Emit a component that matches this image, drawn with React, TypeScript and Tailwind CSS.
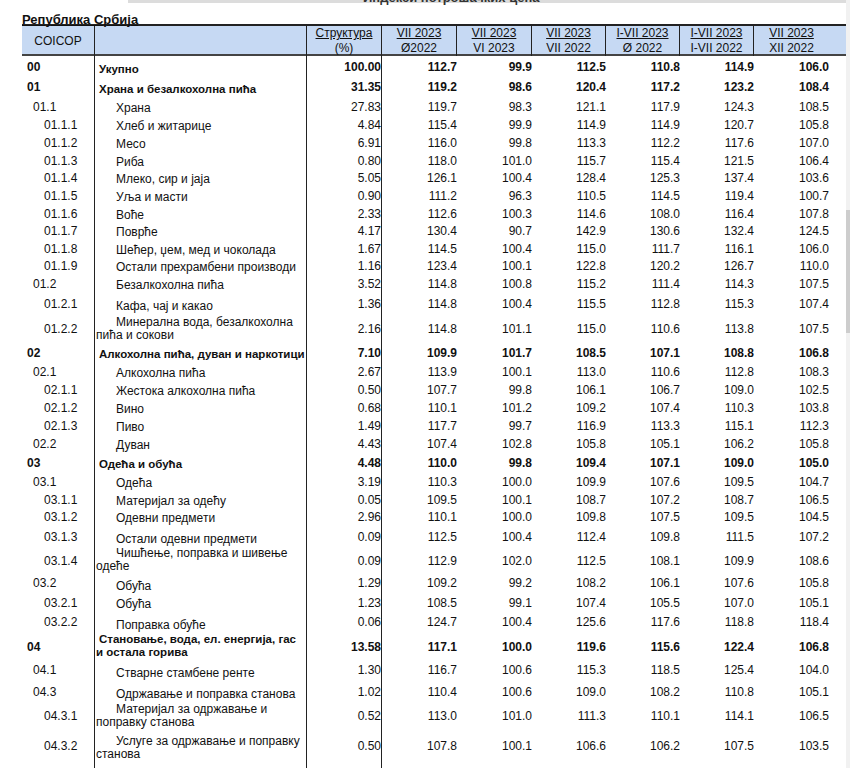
const cols = "grid grid-cols-[73px_212px_75px_75px_75px_74px_74px_74px_75px]";

const headers = [
  ["Структура", "(%)"],
  ["VII 2023", "Ø2022"],
  ["VII 2023", "VI 2023"],
  ["VII 2023", "VII 2022"],
  ["I-VII 2023", "Ø 2022"],
  ["I-VII 2023", "I-VII 2022"],
  ["VII 2023", "XII 2022"],
];

type Row = { code: string; name: string; share: string; v: string[]; h: string };

const rows: Row[] = [
  { code: "00", name: "Укупно", share: "100.00", v: ["112.7", "99.9", "112.5", "110.8", "114.9", "106.0"], h: "h-[21px]" },
  { code: "01", name: "Храна и безалкохолна пића", share: "31.35", v: ["119.2", "98.6", "120.4", "117.2", "123.2", "108.4"], h: "h-[20px]" },
  { code: "01.1", name: "Храна", share: "27.83", v: ["119.7", "98.3", "121.1", "117.9", "124.3", "108.5"], h: "h-[19px]" },
  { code: "01.1.1", name: "Хлеб и житарице", share: "4.84", v: ["115.4", "99.9", "114.9", "114.9", "120.7", "105.8"], h: "h-[18px]" },
  { code: "01.1.2", name: "Месо", share: "6.91", v: ["116.0", "99.8", "113.3", "112.2", "117.6", "107.0"], h: "h-[18px]" },
  { code: "01.1.3", name: "Риба", share: "0.80", v: ["118.0", "101.0", "115.7", "115.4", "121.5", "106.4"], h: "h-[17px]" },
  { code: "01.1.4", name: "Млеко, сир и јаја", share: "5.05", v: ["126.1", "100.4", "128.4", "125.3", "137.4", "103.6"], h: "h-[18px]" },
  { code: "01.1.5", name: "Уља и масти", share: "0.90", v: ["111.2", "96.3", "110.5", "114.5", "119.4", "100.7"], h: "h-[18px]" },
  { code: "01.1.6", name: "Воће", share: "2.33", v: ["112.6", "100.3", "114.6", "108.0", "116.4", "107.8"], h: "h-[17px]" },
  { code: "01.1.7", name: "Поврће", share: "4.17", v: ["130.4", "90.7", "142.9", "130.6", "132.4", "124.5"], h: "h-[18px]" },
  { code: "01.1.8", name: "Шећер, џем, мед и чоколада", share: "1.67", v: ["114.5", "100.4", "115.0", "111.7", "116.1", "106.0"], h: "h-[17px]" },
  { code: "01.1.9", name: "Остали прехрамбени производи", share: "1.16", v: ["123.4", "100.1", "122.8", "120.2", "126.7", "110.0"], h: "h-[18px]" },
  { code: "01.2", name: "Безалкохолна пића", share: "3.52", v: ["114.8", "100.8", "115.2", "111.4", "114.3", "107.5"], h: "h-[18px]" },
  { code: "01.2.1", name: "Кафа, чај и какао", share: "1.36", v: ["114.8", "100.4", "115.5", "112.8", "115.3", "107.4"], h: "h-[21px]" },
  { code: "01.2.2", name: "Минерална вода, безалкохолна пића и сокови", share: "2.16", v: ["114.8", "101.1", "115.0", "110.6", "113.8", "107.5"], h: "h-[29px]" },
  { code: "02", name: "Алкохолна пића, дуван и наркотици", share: "7.10", v: ["109.9", "101.7", "108.5", "107.1", "108.8", "106.8"], h: "h-[19px]" },
  { code: "02.1", name: "Алкохолна пића", share: "2.67", v: ["113.9", "100.1", "113.0", "110.6", "112.8", "108.3"], h: "h-[19px]" },
  { code: "02.1.1", name: "Жестока алкохолна пића", share: "0.50", v: ["107.7", "99.8", "106.1", "106.7", "109.0", "102.5"], h: "h-[18px]" },
  { code: "02.1.2", name: "Вино", share: "0.68", v: ["110.1", "101.2", "109.2", "107.4", "110.3", "103.8"], h: "h-[18px]" },
  { code: "02.1.3", name: "Пиво", share: "1.49", v: ["117.7", "99.7", "116.9", "113.3", "115.1", "112.3"], h: "h-[17px]" },
  { code: "02.2", name: "Дуван", share: "4.43", v: ["107.4", "102.8", "105.8", "105.1", "106.2", "105.8"], h: "h-[19px]" },
  { code: "03", name: "Одећа и обућа", share: "4.48", v: ["110.0", "99.8", "109.4", "107.1", "109.0", "105.0"], h: "h-[19px]" },
  { code: "03.1", name: "Одећа", share: "3.19", v: ["110.3", "100.0", "109.9", "107.6", "109.5", "104.7"], h: "h-[19px]" },
  { code: "03.1.1", name: "Материјал за одећу", share: "0.05", v: ["109.5", "100.1", "108.7", "107.2", "108.7", "106.5"], h: "h-[17px]" },
  { code: "03.1.2", name: "Одевни предмети", share: "2.96", v: ["110.1", "100.0", "109.8", "107.5", "109.5", "104.5"], h: "h-[18px]" },
  { code: "03.1.3", name: "Остали одевни предмети", share: "0.09", v: ["112.5", "100.4", "112.4", "109.8", "111.5", "107.2"], h: "h-[21px]" },
  { code: "03.1.4", name: "Чишћење, поправка и шивење одеће", share: "0.09", v: ["112.9", "102.0", "112.5", "108.1", "109.9", "108.6"], h: "h-[25px]" },
  { code: "03.2", name: "Обућа", share: "1.29", v: ["109.2", "99.2", "108.2", "106.1", "107.6", "105.8"], h: "h-[22px]" },
  { code: "03.2.1", name: "Обућа", share: "1.23", v: ["108.5", "99.1", "107.4", "105.5", "107.0", "105.1"], h: "h-[17px]" },
  { code: "03.2.2", name: "Поправка обуће", share: "0.06", v: ["124.7", "100.4", "125.6", "117.6", "118.8", "118.4"], h: "h-[22px]" },
  { code: "04", name: "Становање, вода, ел. енергија, гас и остала горива", share: "13.58", v: ["117.1", "100.0", "119.6", "115.6", "122.4", "106.8"], h: "h-[26px]" },
  { code: "04.1", name: "Стварне стамбене ренте", share: "1.30", v: ["116.7", "100.6", "115.3", "118.5", "125.4", "104.0"], h: "h-[22px]" },
  { code: "04.3", name: "Одржавање и поправка станова", share: "1.02", v: ["110.4", "100.6", "109.0", "108.2", "110.8", "105.1"], h: "h-[21px]" },
  { code: "04.3.1", name: "Материјал за одржавање и поправку станова", share: "0.52", v: ["113.0", "101.0", "111.3", "110.1", "114.1", "106.5"], h: "h-[28px]" },
  { code: "04.3.2", name: "Услуге за одржавање и поправку станова", share: "0.50", v: ["107.8", "100.1", "106.6", "106.2", "107.5", "103.5"], h: "h-[32px]" },
];

const codePad = ["pl-[5px] font-bold", "pl-[11px]", "pl-[22px]"];

function DataRow({ row }: { row: Row }) {
  const level = row.code.split(".").length - 1;
  const top = level === 0;
  return (
    <div className={`${cols} ${row.h}`}>
      <div className={`flex items-center border-r border-[#222] ${codePad[level]}`}>{row.code}</div>
      <div className="flex items-end border-r border-[#222] pb-[1px]">
        <div
          className={`w-full pl-[1px] leading-[13px] ${top ? "indent-[3px] text-[11.5px] font-bold" : "indent-[20px]"}`}
        >
          {row.name}
        </div>
      </div>
      <div className={`flex items-center justify-end border-r border-[#222] ${top ? "font-bold" : ""}`}>
        {row.share}
      </div>
      {row.v.map((n, i) => (
        <div key={i} className={`flex items-center justify-end ${top ? "font-bold" : ""}`}>
          {n}
        </div>
      ))}
    </div>
  );
}

export default function App() {
  return (
    <div className="flex h-[768px] overflow-hidden bg-white font-['Liberation_Sans',Arial,sans-serif] text-[12px] text-[#111]">
      <div className="w-[846px] shrink-0">
        {/* heading of the page above, mostly scrolled out of view */}
        <div className="relative h-[6px] overflow-hidden">
          <div className="ml-[128px] h-[3px] bg-[#dcdcdc]" />
          <div className="absolute left-[363px] top-[-9px] text-[13px] font-bold leading-none text-[#333]">
            Индекси потрошачких цена
          </div>
        </div>

        <div className="ml-[22px]">
          <div className="h-[18px] pt-[7px] text-[13px] font-bold leading-none underline">Република Србија</div>

          {/* header */}
          <div className={`${cols} h-[32px] border-t-2 border-b-2 border-t-[#222] border-b-[#444] bg-[#c6d9f3]`}>
            <div className="flex items-center justify-center border-r border-[#222]">COICOP</div>
            <div className="border-r border-[#222]" />
            {headers.map(([a, b], i) => (
              <div
                key={a + b}
                className={`flex flex-col items-center justify-center leading-[15px] ${i < headers.length - 1 ? "border-r border-[#222]" : ""}`}
              >
                <span className="underline">{a}</span>
                <span>{b}</span>
              </div>
            ))}
          </div>

          {rows.map((r) => (
            <DataRow key={r.code} row={r} />
          ))}

          <div className={`${cols} h-[40px]`}>
            <div className="border-r border-[#222]" />
            <div className="border-r border-[#222]" />
            <div className="border-r border-[#222]" />
          </div>
        </div>
      </div>

      {/* scrollbar */}
      <div className="flex-1 bg-[#f1f1f1]">
        <div className="mt-[210px] h-[123px] bg-[#cdcdcd]" />
      </div>
    </div>
  );
}
